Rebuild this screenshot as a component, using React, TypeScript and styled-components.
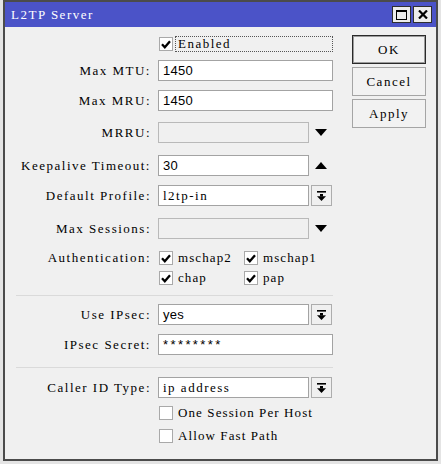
import React from 'react';
import styled, { createGlobalStyle } from 'styled-components';

const SERIF = '"Liberation Serif", "DejaVu Serif", serif';
const SANS = '"Liberation Sans", Arial, sans-serif';

const GlobalStyle = createGlobalStyle`
  html, body {
    margin: 0;
    padding: 0;
    background: #e4e4e4;
  }
  body {
    color: #000;
    font-family: ${SERIF};
    font-size: 13px;
    letter-spacing: 1.5px;
  }
`;

const Window = styled.div`
  background: #f0f0f0;
  border: 2px solid #4b4b4b;
  box-sizing: border-box;
  display: flex;
  flex-direction: column;
  height: 461px;
  margin-left: 3px;
  width: 435px;
`;

const TitleBar = styled.div`
  align-items: center;
  background: #4b53c8;
  color: #fff;
  display: flex;
  height: 25px;
  justify-content: space-between;
  padding: 0 4px 0 6px;
`;

const TitleText = styled.span`
  font-size: 13px;
`;

const TitleButtons = styled.div`
  display: flex;
  gap: 2px;
`;

const TitleButton = styled.div`
  align-items: center;
  background: #ececec;
  border: 1px solid #2e2e2e;
  box-sizing: border-box;
  display: flex;
  height: 17px;
  justify-content: center;
  width: 19px;
`;

const Body = styled.div`
  display: flex;
  flex: 1;
  padding: 9px 0 0 11px;
`;

const Form = styled.div`
  display: flex;
  flex-direction: column;
  width: 317px;
`;

const Row = styled.div<{ $mt?: number; $top?: boolean }>`
  align-items: ${(p) => (p.$top ? 'start' : 'center')};
  column-gap: 8px;
  display: grid;
  grid-template-columns: 134px 175px;
  margin-top: ${(p) => p.$mt ?? 0}px;
`;

const Label = styled.label`
  line-height: 14px;
  margin-right: -1px;
  text-align: right;
  white-space: nowrap;
`;

const Field = styled.div`
  align-items: center;
  display: flex;
  height: 21px;
`;

const Input = styled.div<{ $sans?: boolean; $disabled?: boolean; $narrow?: boolean; $stars?: boolean }>`
  align-items: center;
  background: ${(p) => (p.$disabled ? '#f0f0f0' : '#fff')};
  border: 1px solid ${(p) => (p.$disabled ? '#b9b9b9' : '#a3a3a3')};
  box-sizing: border-box;
  display: flex;
  font-family: ${(p) => (p.$sans ? SANS : SERIF)};
  font-size: 13px;
  height: 21px;
  letter-spacing: ${(p) => (p.$stars ? '2.4px' : p.$sans ? '0.3px' : '1.5px')};
  padding-left: 4px;
  width: ${(p) => (p.$narrow ? '151px' : '175px')};
`;

const ArrowSlot = styled.div`
  display: flex;
  justify-content: center;
  width: 24px;
`;

const DropButton = styled.div`
  align-items: center;
  background: #f0f0f0;
  border: 1px solid #adadad;
  box-sizing: border-box;
  display: flex;
  height: 21px;
  justify-content: center;
  margin-left: 2px;
  width: 21px;
`;

const CheckLine = styled.div<{ $h?: number }>`
  align-items: center;
  display: flex;
  height: ${(p) => p.$h ?? 14}px;
`;

const Box = styled.div`
  align-items: center;
  background: #fff;
  border: 1px solid #a9a9a9;
  box-sizing: border-box;
  display: flex;
  flex: none;
  height: 14px;
  justify-content: center;
  margin-left: 1px;
  width: 14px;
`;

const CheckText = styled.span`
  letter-spacing: 1.1px;
  margin-left: 5px;
  white-space: nowrap;
`;

const FocusText = styled.span`
  border: 1px dotted #555;
  box-sizing: border-box;
  flex: 1;
  height: 16px;
  line-height: 14px;
  margin-left: 2px;
  padding-left: 2px;
`;

const AuthGrid = styled.div`
  display: grid;
  grid-template-columns: 85px 90px;
  row-gap: 6px;
`;

const Separator = styled.div<{ $mt: number }>`
  background: #dadada;
  height: 1px;
  margin-top: ${(p) => p.$mt}px;
  width: 317px;
`;

const ButtonColumn = styled.div`
  display: flex;
  flex-direction: column;
  gap: 3px;
  margin-left: 19px;
  margin-top: -1px;
`;

const Button = styled.div<{ $default?: boolean }>`
  align-items: center;
  background: #f2f2f2;
  border: 1px solid ${(p) => (p.$default ? '#2a2a2a' : '#a5a5a5')};
  box-shadow: ${(p) => (p.$default ? 'inset 0 0 0 1px #9c9c9c' : 'none')};
  box-sizing: border-box;
  display: flex;
  height: 29px;
  justify-content: center;
  width: 74px;
`;

const Tick = () => (
  <svg width="10" height="9" viewBox="0 0 10 9">
    <path d="M1 4.2 L3.8 7.2 L9 1.2" fill="none" stroke="#000" strokeWidth="2.3" />
  </svg>
);

const Checkbox = ({ checked, label }: { checked?: boolean; label: string }) => (
  <CheckLine>
    <Box>{checked && <Tick />}</Box>
    <CheckText>{label}</CheckText>
  </CheckLine>
);

const TriDown = () => (
  <svg width="12" height="7" viewBox="0 0 12 7">
    <path d="M0 0 H12 L6 7 Z" fill="#000" />
  </svg>
);

const TriUp = () => (
  <svg width="12" height="7" viewBox="0 0 12 7">
    <path d="M0 7 H12 L6 0 Z" fill="#000" />
  </svg>
);

const DropIcon = () => (
  <svg width="9" height="10" viewBox="0 0 9 10">
    <rect x="0" y="0" width="9" height="1.6" fill="#000" />
    <rect x="3" y="3" width="3" height="2.5" fill="#000" />
    <path d="M0 5.2 H9 L4.5 10 Z" fill="#000" />
  </svg>
);

const Select = ({ value, sans }: { value: string; sans?: boolean }) => (
  <Field>
    <Input $narrow $sans={sans}>{value}</Input>
    <DropButton>
      <DropIcon />
    </DropButton>
  </Field>
);

const App = () => {
  return (
    <>
      <GlobalStyle />
      <Window>
        <TitleBar>
          <TitleText>L2TP Server</TitleText>
          <TitleButtons>
            <TitleButton>
              <svg width="11" height="10" viewBox="0 0 11 10">
                <rect x="0.5" y="0.5" width="10" height="9" fill="none" stroke="#000" />
                <rect x="0" y="0" width="11" height="2" fill="#000" />
              </svg>
            </TitleButton>
            <TitleButton>
              <svg width="10" height="9" viewBox="0 0 10 9">
                <path d="M1 0.5 L9 8.5 M9 0.5 L1 8.5" stroke="#000" strokeWidth="2.2" />
              </svg>
            </TitleButton>
          </TitleButtons>
        </TitleBar>
        <Body>
          <Form>
            <Row>
              <span />
              <CheckLine $h={16}>
                <Box>
                  <Tick />
                </Box>
                <FocusText>Enabled</FocusText>
              </CheckLine>
            </Row>
            <Row $mt={8}>
              <Label>Max MTU:</Label>
              <Field>
                <Input $sans>1450</Input>
              </Field>
            </Row>
            <Row $mt={9}>
              <Label>Max MRU:</Label>
              <Field>
                <Input $sans>1450</Input>
              </Field>
            </Row>
            <Row $mt={11}>
              <Label>MRRU:</Label>
              <Field>
                <Input $narrow $disabled />
                <ArrowSlot>
                  <TriDown />
                </ArrowSlot>
              </Field>
            </Row>
            <Row $mt={12}>
              <Label>Keepalive Timeout:</Label>
              <Field>
                <Input $narrow $sans>30</Input>
                <ArrowSlot>
                  <TriUp />
                </ArrowSlot>
              </Field>
            </Row>
            <Row $mt={9}>
              <Label>Default Profile:</Label>
              <Select value="l2tp-in" />
            </Row>
            <Row $mt={12}>
              <Label>Max Sessions:</Label>
              <Field>
                <Input $narrow $disabled />
                <ArrowSlot>
                  <TriDown />
                </ArrowSlot>
              </Field>
            </Row>
            <Row $mt={12} $top>
              <Label>Authentication:</Label>
              <AuthGrid>
                <Checkbox checked label="mschap2" />
                <Checkbox checked label="mschap1" />
                <Checkbox checked label="chap" />
                <Checkbox checked label="pap" />
              </AuthGrid>
            </Row>
            <Separator $mt={10} />
            <Row $mt={8}>
              <Label>Use IPsec:</Label>
              <Select value="yes" sans />
            </Row>
            <Row $mt={9}>
              <Label>IPsec Secret:</Label>
              <Field>
                <Input $sans $stars>********</Input>
              </Field>
            </Row>
            <Separator $mt={12} />
            <Row $mt={9}>
              <Label>Caller ID Type:</Label>
              <Select value="ip address" />
            </Row>
            <Row $mt={8}>
              <span />
              <Checkbox label="One Session Per Host" />
            </Row>
            <Row $mt={9}>
              <span />
              <Checkbox label="Allow Fast Path" />
            </Row>
          </Form>
          <ButtonColumn>
            <Button $default>OK</Button>
            <Button>Cancel</Button>
            <Button>Apply</Button>
          </ButtonColumn>
        </Body>
      </Window>
    </>
  );
};

export default App;
